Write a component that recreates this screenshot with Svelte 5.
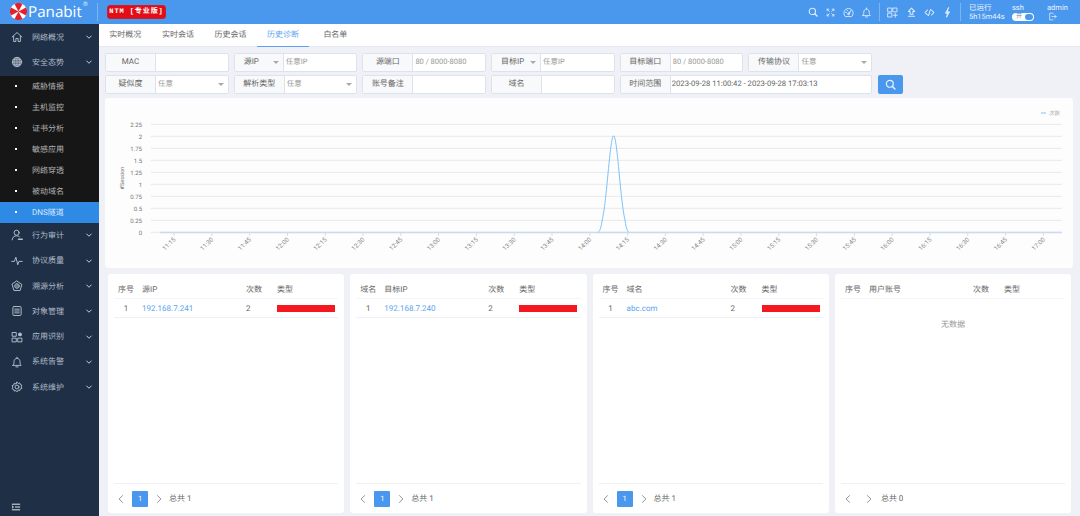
<script>
  const subs = ['威胁情报', '主机监控', '证书分析', '敏感应用', '网络穿透', '被动域名', 'DNS隧道'];
  const lower = [
    { t: '行为审计', i: 'user' },
    { t: '协议质量', i: 'pulse' },
    { t: '溯源分析', i: 'shield' },
    { t: '对象管理', i: 'list' },
    { t: '应用识别', i: 'apps' },
    { t: '系统告警', i: 'bell' },
    { t: '系统维护', i: 'gear' }
  ];
  const tabs = ['实时概况', '实时会话', '历史会话', '历史诊断', '白名单'];
  const filters = [
    { l: 'MAC', v: '' },
    { l: '源IP', v: '任意IP', drop: true },
    { l: '源端口', v: '80 / 8000-8080' },
    { l: '目标IP', v: '任意IP', drop: true },
    { l: '目标端口', v: '80 / 8000-8080' },
    { l: '传输协议', v: '任意', arrow: true },
    { l: '疑似度', v: '任意', arrow: true },
    { l: '解析类型', v: '任意', arrow: true },
    { l: '账号备注', v: '' },
    { l: '域名', v: '' }
  ];
  const yTicks = ['2.25', '2', '1.75', '1.5', '1.25', '1', '0.75', '0.5', '0.25', '0'];
  const times = [];
  for (let m = 11 * 60 + 15; m <= 17 * 60; m += 15) {
    times.push(`${Math.floor(m / 60)}:${String(m % 60).padStart(2, '0')}`);
  }
  const y0 = 232.3;
  const yStep = 12;
  const tx = (i) => 174 + i * 37.8;
  let line = 'M598 ' + y0;
  for (let x = 598; x <= 629; x += 0.5) {
    const g = Math.exp(-Math.pow((x - 613.6) / 5.6, 2) / 2);
    const edge = Math.min(1, Math.max(0, Math.min(x - 598, 629 - x) / 4));
    line += ` L${x} ${(y0 - 96.4 * g * edge).toFixed(2)}`;
  }
  const tables = [
    { c1: '序号', c2: '源IP', rows: [['1', '192.168.7.241']], total: 1 },
    { c1: '域名', c2: '目标IP', rows: [['1', '192.168.7.240']], total: 1 },
    { c1: '序号', c2: '域名', rows: [['1', 'abc.com']], total: 1 },
    { c1: '序号', c2: '用户账号', rows: [], total: 0 }
  ];
</script>

{#snippet icon(name, size = 12)}
  <svg class="ic" width={size} height={size} viewBox="0 0 16 16" fill="none" stroke="currentColor" stroke-width="1.3" stroke-linecap="round" stroke-linejoin="round">
    {#if name === 'home'}
      <path d="M1.5 8 8 2l6.5 6M3.5 7v7h3v-4h3v4h3V7" />
    {:else if name === 'globe'}
      <circle cx="8" cy="8" r="6.2" fill="currentColor" fill-opacity=".45" /><path d="M2 8h12M8 2v12M3.5 4.5h9M3.5 11.5h9M5.5 2.5c-2 3-2 8 0 11M10.5 2.5c2 3 2 8 0 11" stroke-width=".9" />
    {:else if name === 'user'}
      <circle cx="7.5" cy="5" r="3.4" /><path d="M1.5 14.5c.5-4 3-5.5 6-5.5 1.4 0 2.6.4 3.6 1.2" /><path d="M10 13.5h5" stroke-width="2" />
    {:else if name === 'pulse'}
      <path d="M1 8.5h3.5L6.5 3l2.5 10 1.5-4.5H15" />
    {:else if name === 'shield'}
      <path d="M8 1.5 14.5 6l-2.4 8H3.9L1.5 6Z" /><circle cx="8" cy="8" r="3" /><path d="M5 8h6M8 5v6" stroke-width=".8" />
    {:else if name === 'list'}
      <rect x="2.5" y="2" width="11" height="12" rx="1.5" /><path d="M5 5.5h6M5 8h6M5 10.5h6" />
    {:else if name === 'apps'}
      <rect x="2" y="2" width="5" height="5" /><rect x="2" y="9.5" width="5" height="5" /><rect x="9.5" y="9.5" width="5" height="5" /><circle cx="12" cy="4.5" r="2.6" fill="currentColor" stroke="none" />
    {:else if name === 'bell'}
      <path d="M2.5 12.5h11c-1.2-1.2-1.5-2.5-1.5-5 0-2.5-1.800-4.500-4-4.500S4 5 4 7.500c0 2.500-.3 3.800-1.500 5Z" /><path d="M8 1.500V3M6.500 14.500h3" />
    {:else if name === 'gear'}
      <circle cx="8" cy="8" r="2.6" /><path d="M8 1.5l1.5 1.7 2.2-.6.6 2.2 2.2.8-.8 2.1.8 2.1-2.2.8-.6 2.2-2.2-.6L8 14.5l-1.5-1.7-2.2.6-.6-2.2-2.2-.8.8-2.1-.8-2.1 2.2-.8.6-2.2 2.2.6Z" />
    {:else if name === 'chev'}
      <path d="M3.5 6 8 10.5 12.5 6" stroke-width="2" />
    {:else if name === 'search'}
      <circle cx="7" cy="7" r="5" stroke-width="1.8" /><path d="M10.8 10.8 14.5 14.5" stroke-width="2.2" />
    {:else if name === 'full'}
      <path d="M2 2l4 4M14 2l-4 4M2 14l4-4M14 14l-4-4M2 5V2h3M14 5V2h-3M2 11v3h3M14 11v3h-3" stroke-width="1.5" />
    {:else if name === 'gauge'}
      <path d="M3 13.5A6.8 6.8 0 1 1 13 13.5Z" /><path d="M8 10l3.5-4.5" stroke-width="1.6" /><circle cx="8" cy="10" r="1.3" /><path d="M4 8h1M6 4.800l.5.8" />
    {:else if name === 'grid'}
      <rect x="1.5" y="1.5" width="5.5" height="5.5" /><rect x="9" y="1.5" width="5.5" height="5.5" /><rect x="1.5" y="9" width="5.5" height="5.5" /><path d="M12 9v6M9 12h6" />
    {:else if name === 'upload'}
      <path d="M8 1.5 3.5 6.5H6v4h4v-4h2.5ZM3.5 13.5h9" stroke-width="1.5" />
    {:else if name === 'code'}
      <path d="M5 4.5 1.500 8 5 11.500M11 4.500 14.500 8 11 11.500M9.500 3.500l-3 9" stroke-width="1.5" />
    {:else if name === 'bolt'}
      <path d="M9.5 1 5 9h3l-1.5 6L11 7H8Z" fill="currentColor" />
    {:else if name === 'logout'}
      <path d="M9 2H3v12h6M7 8h7.5M11.5 5l3 3-3 3" />
    {:else if name === 'left'}
      <path d="M10.5 2.5 5 8l5.5 5.5" />
    {:else if name === 'right'}
      <path d="M5.5 2.5 11 8l-5.5 5.5" />
    {:else if name === 'menu'}
      <path d="M2 3.5h12M7 8h7M2 12.5h12M2 6.500 4 8 2 9.500" stroke-width="1.4" />
    {/if}
  </svg>
{/snippet}

<div class="app">
  <header class="top">
    <div class="brand">
      <svg class="logo" width="17" height="17" viewBox="0 0 32 32">
        <circle cx="16" cy="16" r="16" fill="#fff" />
        <path d="M16 16 8.5 1.9A16 16 0 0 1 23.5 1.9Z" fill="#e5202c" />
        <path d="M16 16 30.1 8.5A16 16 0 0 1 30.1 23.5Z" fill="#e5202c" />
        <path d="M16 16 23.5 30.1A16 16 0 0 1 8.5 30.1Z" fill="#e5202c" />
        <path d="M16 16 1.9 23.5A16 16 0 0 1 1.9 8.5Z" fill="#e5202c" />
      </svg>
      <span class="name">Panabit</span><span class="reg">®</span>
    </div>
    <span class="badge">NTM [专业版]</span>
    <div class="tools">
      <span class="t1 s1">{@render icon('search', 10)}</span>
      <span class="t1">{@render icon('full', 9)}</span>
      <span class="t1">{@render icon('gauge', 11)}</span>
      <span class="t1">{@render icon('bell', 11)}</span>
      <i class="vsep"></i>
      <span class="t1 s2">{@render icon('grid', 11)}</span>
      <span class="t1">{@render icon('upload', 11)}</span>
      <span class="t1">{@render icon('code', 11)}</span>
      <span class="t1">{@render icon('bolt', 11)}</span>
      <i class="vsep last"></i>
      <div class="stat up"><span>已运行</span><span>5h15m44s</span></div>
      <div class="stat ssh"><span>ssh</span><span class="toggle">开<b></b></span></div>
      <div class="stat adm"><span>admin</span><span class="lo">{@render icon('logout', 9)}</span></div>
    </div>
  </header>

  <aside class="side">
    <div class="nav">{@render icon('home')}<span>网络概况</span>{@render icon('chev', 8)}</div>
    <div class="nav">{@render icon('globe')}<span>安全态势</span>{@render icon('chev', 8)}</div>
    <div class="subs">
      {#each subs as s, i}
        <div class="sub" class:on={i === 6}><i></i><span>{s}</span></div>
      {/each}
    </div>
    {#each lower as n}
      <div class="nav">{@render icon(n.i)}<span>{n.t}</span>{@render icon('chev', 8)}</div>
    {/each}
    <div class="collapse">{@render icon('menu', 10)}</div>
  </aside>

  <main class="main">
    <nav class="tabs">
      {#each tabs as t, i}
        <span class="tab" class:active={i === 3}>{t}</span>
      {/each}
    </nav>

    <div class="filters">
      {#each filters as f}
        <div class="fg">
          <span class="lb" class:drop={f.drop}>{f.l}{#if f.drop}<em class="car"></em>{/if}</span>
          <span class="val" class:ph={f.v !== ''}>{f.v}{#if f.arrow}<em class="car"></em>{/if}</span>
        </div>
      {/each}
      <div class="fg wide">
        <span class="lb">时间范围</span>
        <span class="val dark">2023-09-28 11:00:42 - 2023-09-28 17:03:13</span>
      </div>
      <button class="go" aria-label="搜索">{@render icon('search', 11)}</button>
    </div>

    <section class="chart">
      <svg width="968" height="170" viewBox="105 98 968 170">
        {#each yTicks as y, i}
          <line x1="151" x2="1062" y1={124.3 + i * yStep} y2={124.3 + i * yStep} class="grid" />
          <text x="142" y={126.6 + i * yStep} text-anchor="end" class="tick">{y}</text>
        {/each}
        <line x1="1041" x2="1046" y1="113" y2="113" class="leg" />
        <text x="1049" y="115.3" class="tick legt">次数</text>
        <text transform="translate(124 178) rotate(-90)" text-anchor="middle" class="tick axis">#Session</text>
        {#each times as t, i}
          <line x1={tx(i)} x2={tx(i)} y1="232" y2="236" class="tk" />
          <text transform="translate({tx(i) + 2} 240) rotate(-45)" text-anchor="end" class="tick time">{t}</text>
        {/each}
        <line x1="160" x2="1062" y1="232.5" y2="232.5" class="zero" />
        <path d={line} class="curve" />
      </svg>
    </section>

    <section class="cards">
      {#each tables as t}
        <article class="card">
          <div class="row head">
            <span class="a">{t.c1}</span><span class="b">{t.c2}</span><span class="c">次数</span><span class="d">类型</span>
          </div>
          {#each t.rows as r}
            <div class="row body">
              <span class="a">{r[0]}</span><span class="b link">{r[1]}</span><span class="c">2</span><span class="d"><i class="bar"></i></span>
            </div>
          {/each}
          {#if t.rows.length === 0}
            <div class="none">无数据</div>
          {/if}
          <div class="pager" class:empty={t.total === 0}>
            <span class="pg">{@render icon('left', 10)}</span>
            {#if t.total}<span class="cur">1</span>{/if}
            <span class="pg">{@render icon('right', 10)}</span>
            <span class="tot">总共 {t.total}</span>
          </div>
        </article>
      {/each}
    </section>
  </main>
</div>

<style>
  :global(body) { margin: 0; background: #eff1f6; }
  .app {
    display: grid;
    grid-template-columns: 99px 1fr;
    grid-template-rows: 24px 1fr;
    width: 1080px;
    height: 516px;
    overflow: hidden;
    font-family: "Roboto", "Noto Sans CJK SC", sans-serif;
    font-size: 8px;
    color: #666;
    text-rendering: geometricPrecision;
  }
  .ic { display: block; flex: none; }
  .top { grid-column: 1 / 3; display: flex; align-items: center; background: #4a97ee; color: #fff; }
  .brand { display: flex; align-items: center; width: 98px; height: 24px; padding-left: 10px; box-sizing: border-box; position: relative; flex: none; }
  .brand::after { content: ""; position: absolute; right: 0; top: 3px; bottom: 3px; width: 1px; background: #7db5f3; }
  .logo { flex: none; margin-top: -1px; }
  .name { font-family: "Open Sans", sans-serif; font-size: 15.2px; line-height: 24px; margin-left: 1px; }
  .reg { font-size: 6px; align-self: flex-start; margin: 1px 0 0 1px; color: #dcebfc; }
  .badge {
    margin-left: 9px;
    width: 59px;
    height: 14px;
    box-sizing: border-box;
    border: 1px solid #c5222e;
    border-radius: 3px;
    background: #e20d16;
    font-family: "Liberation Mono", "Noto Sans CJK SC", monospace;
    font-weight: 700;
    font-size: 7px;
    line-height: 12px;
    letter-spacing: .9px;
    text-align: center;
    white-space: nowrap;
  }
  .tools { margin-left: auto; display: flex; align-items: center; height: 24px; padding-right: 12px; }
  .t1 { width: 18.3px; display: flex; justify-content: center; color: #dcebfd; }
  .s1 { width: 16.5px; }
  .s2 { margin-left: 1px; }
  .vsep { width: 1px; height: 18px; background: #7db5f3; margin: 0 3px; flex: none; }
  .vsep.last { margin-right: 2px; }
  .stat { display: flex; flex-direction: column; justify-content: space-between; height: 18px; font-size: 7.5px; line-height: 9px; color: #eaf3fe; white-space: nowrap; }
  .up { margin-left: 6px; width: 43px; }
  .ssh { width: 35px; }
  .adm { width: 21px; }
  .toggle {
    display: flex; align-items: center; width: 22px; height: 8px; box-sizing: border-box;
    background: #fff; border-radius: 4px; padding-left: 4px; font-size: 6px; line-height: 8px; position: relative; color: #6b8db5;
  }
  .toggle b { position: absolute; right: 1px; top: 1px; width: 8px; height: 6px; border-radius: 3px; background: #4a97ee; }
  .lo { color: #eaf3fe; padding-left: 1px; }

  .side { display: flex; flex-direction: column; background: #1e2f46; color: #b3bcc8; padding-top: .5px; }
  .nav { display: flex; align-items: center; height: 25.3px; flex: none; padding: 0 6px 0 11px; }
  .nav span { margin-left: 9px; flex: 1; font-size: 8px; }
  .nav :global(.ic:last-child) { color: #c8d0da; }
  .subs { background: #161616; margin-top: 0.7px; }
  .sub { display: flex; align-items: center; height: 21px; color: #b3b3b3; }
  .sub i { width: 2px; height: 2px; background: #fff; margin: 0 15px; }
  .sub.on { background: #2f8ae6; color: #d8e9fc; }
  .collapse { margin-top: auto; padding: 0 0 1px 11px; color: #fff; height: 13px; }

  .main { display: flex; flex-direction: column; min-width: 0; }
  .tabs { display: flex; height: 23px; background: #fff; border-bottom: 1px solid #e4e8f0; flex: none; box-sizing: border-box; }
  .tab { width: 52.6px; text-align: center; line-height: 22px; font-size: 8px; color: #666; box-sizing: border-box; height: 23px; }
  .tab.active { color: #5ba4f2; border-bottom: 1.5px solid #5ba4f2; }
  .tab:last-child { margin-left: 4px; width: 44px; }

  .filters {
    display: grid;
    grid-template-columns: repeat(6, 123.7px) 25px;
    column-gap: 5px;
    row-gap: 3.5px;
    margin: 6px 0 0 6px;
    flex: none;
  }
  .fg { display: flex; height: 18.5px; box-sizing: border-box; border: 1px solid #dde3ee; border-radius: 2px; background: #fff; min-width: 0; }
  .fg:nth-child(7) { grid-column: 1; }
  .wide { grid-column: 5 / 7; }
  .lb { position: relative; flex: none; width: 49px; background: #f8f9fb; border-right: 1px solid #dde3ee; text-align: center; line-height: 16px; color: #666; }
  .lb.drop { text-align: left; padding-left: 9px; box-sizing: border-box; }
  .val { flex: 1; position: relative; padding-left: 2px; line-height: 16px; font-size: 7.5px; white-space: nowrap; overflow: hidden; }
  .ph { color: #999; }
  .val.dark { color: #666; font-size: 7.65px; padding-left: 1px; }
  .car { position: absolute; right: 4px; top: 6.5px; border: 3px solid transparent; border-top: 3.5px solid #aaa; border-bottom: 0; }
  .go { grid-column: 7; grid-row: 2; height: 19px; width: 25px; margin-left: 1px; border: 0; padding: 0; border-radius: 2px; background: #4a97ee; color: #e8f2fe; display: flex; align-items: center; justify-content: center; }

  .chart { margin: 4px 7px 0 6px; height: 170px; background: #fdfdfd; border-radius: 3px; flex: none; overflow: hidden; }
  .chart svg { display: block; }
  .grid { stroke: #e8e8e8; stroke-width: 1; }
  .tk { stroke: #cfe0f2; stroke-width: 1; }
  .zero { stroke: #c9dcef; stroke-width: 1.6; }
  .curve { fill: none; stroke: #7cc3fb; stroke-width: 1; }
  .leg { stroke: #7cc3fb; stroke-width: 1; }
  .tick { font-size: 6px; fill: #777; font-family: "Roboto", sans-serif; }
  .legt { fill: #aaa; font-family: "Noto Sans CJK SC", sans-serif; font-size: 5.5px; }
  .axis { font-size: 5.5px; }
  .time { font-size: 6.3px; fill: #888; }

  .cards { display: grid; grid-template-columns: repeat(4, 236.3px); column-gap: 6px; margin: 6px 0 0 9px; flex: none; }
  .card { display: flex; flex-direction: column; height: 239px; box-sizing: border-box; padding: 6px 6px 0; background: #fff; border-radius: 3px; }
  .row { display: grid; grid-template-columns: 23px 109px 31px 1fr; align-items: center; height: 19px; box-sizing: border-box; flex: none; color: #666; }
  .head { border-bottom: 1px solid #f4f5f8; }
  .body { border-bottom: 1px solid #f0f1f5; }
  .a { text-align: center; padding-left: 1px; }
  .b { padding-left: 5px; }
  .link { color: #5ba4f2; }
  .bar { display: block; width: 58px; height: 7px; background: #f5181e; }
  .none { text-align: center; margin-top: 20px; color: #999; font-size: 8px; line-height: 12px; }
  .pager { margin-top: auto; height: 30px; box-sizing: border-box; border-top: 1px solid #eef0f4; display: flex; align-items: center; padding-left: 2px; flex: none; }
  .pg { width: 10px; color: #777; display: flex; justify-content: center; }
  .cur { width: 16px; height: 16px; margin: 0 6px; background: #4a97ee; color: #fff; border-radius: 1px; text-align: center; line-height: 16px; font-size: 7.5px; }
  .empty .pg + .pg { margin-left: 11px; }
  .tot { margin-left: 5px; font-size: 8px; color: #666; }
  .empty .tot { margin-left: 7px; }
</style>
